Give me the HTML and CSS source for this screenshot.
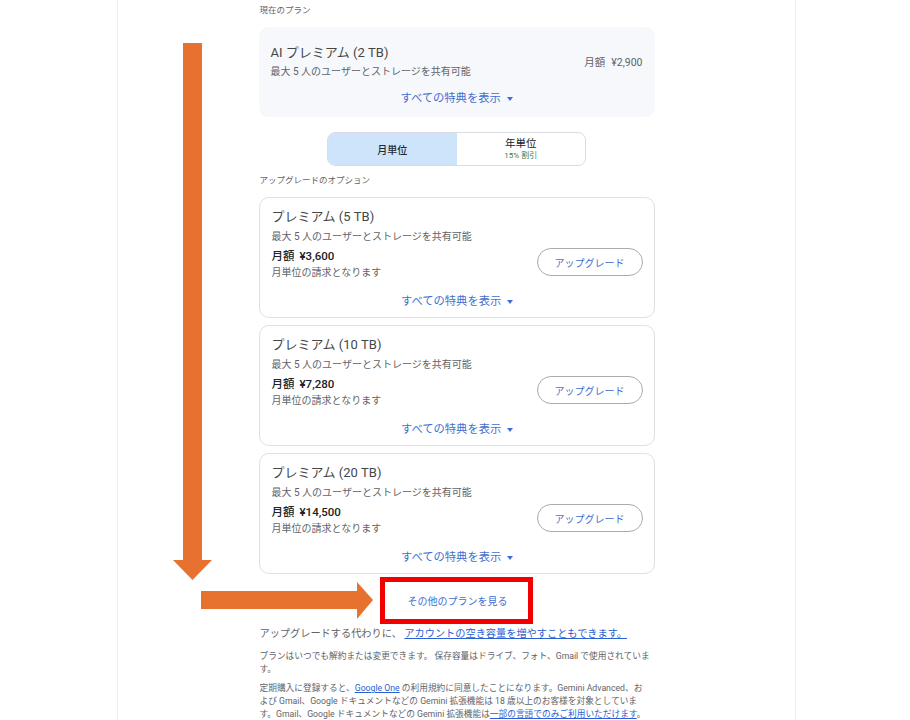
FILE: index.html
```html
<!DOCTYPE html>
<html lang="ja">
<head>
<meta charset="utf-8">
<title>プランの変更</title>
<link rel="stylesheet" href="styles.css">
</head>
<body>
<div class="page">
  <div class="col">
    <div class="label">現在のプラン</div>
    <div class="current">
      <div class="current-head">
        <div>
          <div class="plan-title">AI プレミアム (2 TB)</div>
          <div class="plan-sub">最大 5 人のユーザーとストレージを共有可能</div>
        </div>
        <div class="current-price">月額<span class="yen">¥2,900</span></div>
      </div>
      <div class="benefits">すべての特典を表示 <span class="caret"></span></div>
    </div>

    <div class="toggle">
      <div class="tog tog-on">月単位</div>
      <div class="tog">
        <div class="tog-year">年単位</div>
        <div class="tog-off">15% 割引</div>
      </div>
    </div>

    <div class="label label-opt">アップグレードのオプション</div>

    <div class="card">
      <div class="plan-title">プレミアム (5 TB)</div>
      <div class="plan-sub">最大 5 人のユーザーとストレージを共有可能</div>
      <div class="card-row">
        <div>
          <div class="price">月額<span class="yen">¥3,600</span></div>
          <div class="note">月単位の請求となります</div>
        </div>
        <div class="btn">アップグレード</div>
      </div>
      <div class="benefits">すべての特典を表示 <span class="caret"></span></div>
    </div>

    <div class="card">
      <div class="plan-title">プレミアム (10 TB)</div>
      <div class="plan-sub">最大 5 人のユーザーとストレージを共有可能</div>
      <div class="card-row">
        <div>
          <div class="price">月額<span class="yen">¥7,280</span></div>
          <div class="note">月単位の請求となります</div>
        </div>
        <div class="btn">アップグレード</div>
      </div>
      <div class="benefits">すべての特典を表示 <span class="caret"></span></div>
    </div>

    <div class="card">
      <div class="plan-title">プレミアム (20 TB)</div>
      <div class="plan-sub">最大 5 人のユーザーとストレージを共有可能</div>
      <div class="card-row">
        <div>
          <div class="price">月額<span class="yen">¥14,500</span></div>
          <div class="note">月単位の請求となります</div>
        </div>
        <div class="btn">アップグレード</div>
      </div>
      <div class="benefits">すべての特典を表示 <span class="caret"></span></div>
    </div>

    <div class="more-wrap">
      <div class="more">その他のプランを見る</div>
    </div>

    <p class="instead">アップグレードする代わりに、 <a class="link">アカウントの空き容量を増やすこともできます。</a></p>
    <p class="fine">プランはいつでも解約または変更できます。 保存容量はドライブ、フォト、Gmail で使用されていま<br>す。</p>
    <p class="fine fine2">定期購入に登録すると、<a class="link">Google One</a> の利用規約に同意したことになります。Gemini Advanced、お<br>よび Gmail、Google ドキュメントなどの Gemini 拡張機能は 18 歳以上のお客様を対象としていま<br>す。Gmail、Google ドキュメントなどの Gemini 拡張機能は<a class="link">一部の言語でのみご利用いただけます</a>。</p>
  </div>
</div>

<svg class="arrows" width="910" height="720" viewBox="0 0 910 720">
  <rect x="183" y="43" width="19" height="519" fill="#e7722f"/>
  <polygon points="173,560 212,560 192.5,580" fill="#e7722f"/>
  <rect x="201" y="591" width="157" height="18" fill="#e7722f"/>
  <polygon points="357,582 357,619 373,600" fill="#e7722f"/>
</svg>
</body>
</html>
```

FILE: styles.css
```css
html, body {
  margin: 0;
  padding: 0;
  background: #ffffff;
}

body {
  font-family: Roboto, "Noto Sans CJK JP", sans-serif;
  color: #3c4043;
  height: 720px;
  overflow: hidden;
  position: relative;
}

.page {
  margin-left: 117px;
  width: 679px;
  min-height: 720px;
  border-left: 1px solid #efefef;
  border-right: 1px solid #efefef;
  box-sizing: border-box;
}

.col {
  width: 396px;
  margin: 0 auto;
  padding-top: 3px;
}

.label {
  font-size: 8.5px;
  line-height: 14px;
  color: #5f6368;
  padding-left: 1px;
}

.current {
  margin-top: 10px;
  background: #f6f8fb;
  border-radius: 9px;
  padding: 16px 12px 8px 12px;
  height: 90px;
  box-sizing: border-box;
}

.current-head {
  display: flex;
  justify-content: space-between;
  align-items: center;
}

.plan-title {
  font-size: 13px;
  line-height: 20px;
  color: #444746;
}

.plan-sub {
  font-size: 10px;
  line-height: 18px;
  color: #5f6368;
}

.card .plan-sub {
  line-height: 20px;
}

.current-price {
  font-size: 10.5px;
  color: #5f6368;
  margin-top: -2px;
}

.yen {
  margin-left: 6px;
}

.benefits {
  text-align: center;
  font-size: 11.3px;
  line-height: 18px;
  color: #3f6fcf;
  margin-top: 9px;
}

.caret {
  display: inline-block;
  width: 0;
  height: 0;
  border-left: 3.5px solid transparent;
  border-right: 3.5px solid transparent;
  border-top: 4px solid #3f6fcf;
  vertical-align: middle;
  margin-left: 3px;
}

.toggle {
  margin: 15px auto 0 auto;
  width: 259px;
  height: 34px;
  border: 1px solid #dadce0;
  border-radius: 8px;
  display: flex;
  overflow: hidden;
  box-sizing: border-box;
}

.tog {
  flex: 1;
  display: flex;
  flex-direction: column;
  align-items: center;
  justify-content: center;
  color: #3c4043;
}

.tog-on {
  background: #cde4fa;
  font-size: 10px;
  font-weight: 500;
  color: #1f2a3a;
}

.tog-year {
  font-size: 10.5px;
  line-height: 13px;
  color: #202124;
}

.tog-off {
  font-size: 8px;
  line-height: 11px;
  color: #3a7a4d;
}

.label-opt {
  margin-top: 7px;
}

.card {
  margin-top: 10px;
  border: 1px solid #dfe1e5;
  border-radius: 10px;
  padding: 9px 11px 7px 12px;
  height: 121px;
  box-sizing: border-box;
}

.card + .card {
  margin-top: 7px;
}

.card-row {
  display: flex;
  justify-content: space-between;
  align-items: center;
}

.price {
  font-size: 11.5px;
  line-height: 18px;
  color: #202124;
  font-weight: 500;
}

.price .yen {
  margin-left: 5px;
}

.note {
  font-size: 10px;
  line-height: 16px;
  color: #5f6368;
}

.btn {
  width: 106px;
  height: 28px;
  box-sizing: border-box;
  border: 1px solid #a8abb0;
  border-radius: 14px;
  display: flex;
  align-items: center;
  justify-content: center;
  font-size: 10px;
  color: #3f6fcf;
  margin-top: -4px;
}

.card .benefits {
  margin-top: 12px;
}

.more-wrap {
  display: flex;
  justify-content: center;
  margin-top: 3px;
}

.more {
  width: 153px;
  height: 47px;
  box-sizing: border-box;
  border: 5px solid #f20000;
  display: flex;
  align-items: center;
  justify-content: center;
  font-size: 10px;
  color: #3f6fcf;
  padding-left: 2px;
}

.instead {
  margin: 1px 0 0 1px;
  font-size: 10.2px;
  line-height: 18px;
  color: #5f6368;
  white-space: nowrap;
}

.link {
  color: #2a5fd6;
  text-decoration: underline;
}

.fine {
  margin: 7px 0 0 1px;
  font-size: 8.7px;
  line-height: 13px;
  color: #5f6368;
  white-space: nowrap;
}

.fine2 {
  margin-top: 6px;
}

.arrows {
  position: absolute;
  left: 0;
  top: 0;
  pointer-events: none;
}
```
